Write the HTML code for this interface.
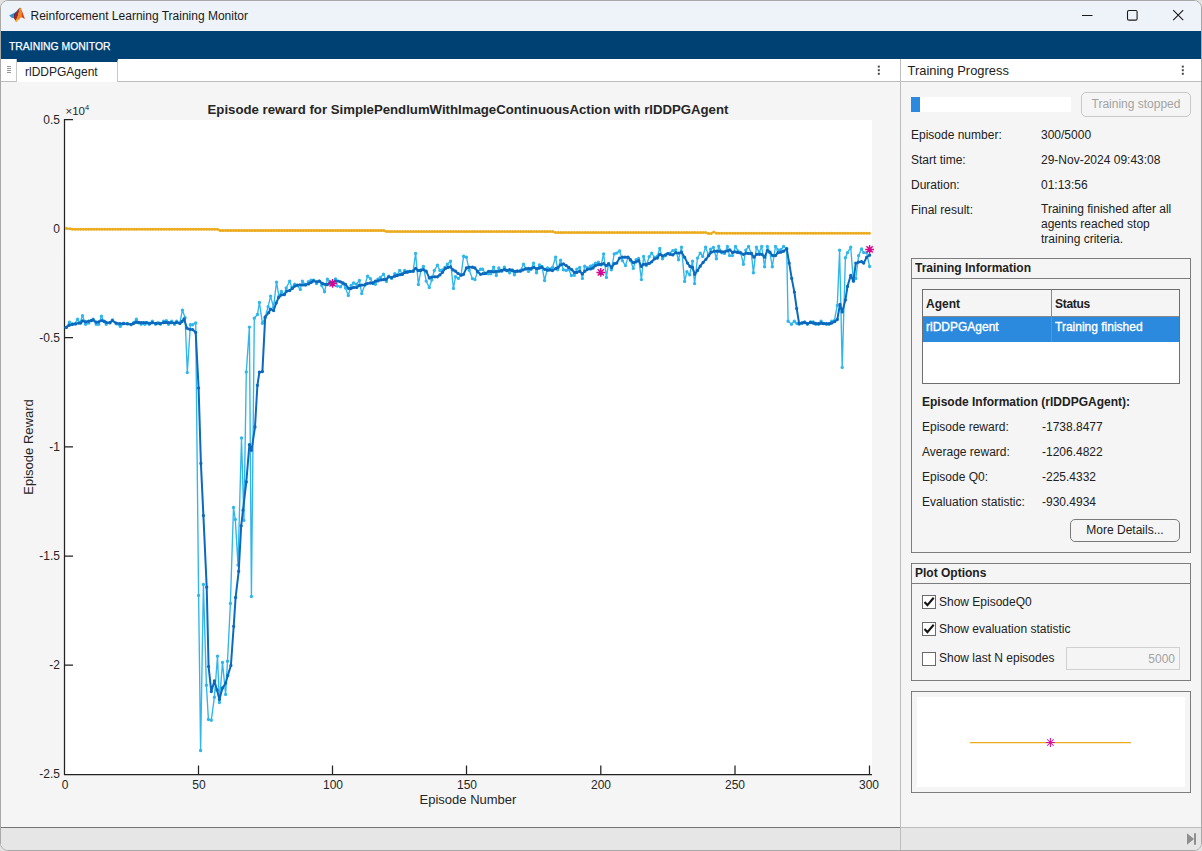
<!DOCTYPE html>
<html><head><meta charset="utf-8"><title>Reinforcement Learning Training Monitor</title>
<style>
*{box-sizing:border-box;margin:0;padding:0}
html,body{width:1202px;height:851px;overflow:hidden;background:#e2e2e2}
body{font-family:"Liberation Sans",sans-serif;font-size:12px;color:#212121;position:relative}
.win{position:absolute;left:0;top:0;width:1202px;height:851px;background:#f5f5f5;border:1px solid #a8a8a8;border-radius:8px;overflow:hidden}
.abs{position:absolute}
.titlebar{left:0;top:0;width:1200px;height:30px;background:#eef3f9}
.title{left:29.5px;top:8px;font-size:12px;color:#1a1a1a;white-space:nowrap}
.strip{left:0;top:30px;width:1200px;height:28px;background:#004173}
.strip span{position:absolute;left:8.4px;top:9px;color:#fff;-webkit-text-stroke:0.25px #fff;font-size:11.3px;white-space:nowrap;transform:scaleX(.921);transform-origin:0 0}
.tabbar{left:0;top:58px;width:1200px;height:23px;background:#fff;border-bottom:1px solid #bdbdbd}
.grip{left:0;top:58px;width:16px;height:23px;background:#fff;border-right:1px solid #c8c8c8;border-bottom:1px solid #bdbdbd}
.tab{left:16px;top:58px;width:101px;height:23px;background:#fff;border-top:3px solid #004173;border-right:1px solid #c8c8c8}
.tab span{position:absolute;left:8px;top:3px;font-size:12px;color:#212121}
.vdiv{left:899px;top:58px;width:1px;height:792px;background:#bdbdbd}
.status{left:0;top:826px;width:1200px;height:24px;background:#e6e6e6;border-top:1px solid #bdbdbd}
.lbl{white-space:nowrap;font-size:12px;line-height:15px;color:#212121}
.b{font-weight:bold}
.sel{color:#fff;-webkit-text-stroke:0.35px #fff}
.box{border:1px solid #7d7d7d}
.btn{border:1px solid #7a7a7a;border-radius:5px;background:#f5f5f5;text-align:center;font-size:12px;line-height:21px}
.cb{width:14px;height:14px;border:1px solid #6a6a6a;background:#fff}
</style></head><body>
<div class="win">
<div class="abs titlebar"></div>
<svg class="abs" style="left:-1px;top:-1px" width="40" height="30" viewBox="0 0 40 30"><path d="M9.1 15.5L14.1 13.1 16.5 11.2 18.6 8.7 19.4 8.2 18.6 11.6 16.2 15.2 13.9 18.3 12 18Z" fill="#2e8fd9"/><path d="M19.3 8.1C18 10.2 16.2 12.8 14.2 14.3L13.9 18.3 16.2 22C17.6 18 18.9 12 19.9 8Z" fill="#9b2a1e"/><path d="M16.9 11.8L14.2 14.2 14.6 16.6Z" fill="#5a2a55"/><path d="M19.6 8.2C20 7.7 20.7 7.7 21.1 8.3 21.5 10.5 21.7 13.5 21.6 17 20 18.2 18 20.6 16.2 22L15.5 20.8C17.6 17 19 12.2 19.6 8.2Z" fill="#ef8525"/><path d="M21 8.2C22 11 23.5 15.4 25 18.8 23.8 18.6 22.5 17.4 21.5 17.3 21.7 14 21.5 10.6 21 8.2Z" fill="#cf3f1d"/><path d="M16.2 22L15.1 20.2C16.2 19.4 17.6 18.9 18.7 18.8 18 20.2 17 21.4 16.2 22Z" fill="#f8b52c"/></svg>
<div class="abs title">Reinforcement Learning Training Monitor</div>
<svg class="abs" style="left:1070px;top:0" width="130" height="30" viewBox="1071 1 130 30"><path d="M1082 15.5h10.5" stroke="#1a1a1a" stroke-width="1.1" fill="none"/><rect x="1127.5" y="10.5" width="9.6" height="9.6" rx="1.4" stroke="#1a1a1a" stroke-width="1.1" fill="none"/><path d="M1173.2 10.2l10 10M1183.2 10.2l-10 10" stroke="#1a1a1a" stroke-width="1.1" fill="none"/></svg>
<div class="abs strip"><span>TRAINING MONITOR</span></div>
<div class="abs tabbar"></div>
<div class="abs grip"><svg width="16" height="22" viewBox="0 0 16 22"><path d="M6 7.5h4M6 9.5h4M6 11.5h4M6 13.5h4" stroke="#8a8a8a" stroke-width="0.9"/></svg></div>
<div class="abs tab"><span>rlDDPGAgent</span></div>
<svg class="abs" style="left:873px;top:62px" width="10" height="16"><rect x="3.8" y="2.6" width="2" height="2" fill="#4a4a4a"/><rect x="3.8" y="6.2" width="2" height="2" fill="#4a4a4a"/><rect x="3.8" y="9.8" width="2" height="2" fill="#4a4a4a"/></svg>
<svg class="abs" style="left:1177px;top:62px" width="10" height="16"><rect x="3.8" y="2.6" width="2" height="2" fill="#4a4a4a"/><rect x="3.8" y="6.2" width="2" height="2" fill="#4a4a4a"/><rect x="3.8" y="9.8" width="2" height="2" fill="#4a4a4a"/></svg>
<div class="abs" style="left:-1px;top:81px"><svg class="chart" width="900" height="746" viewBox="0 82 900 746">
<rect x="65" y="120" width="807" height="654" fill="#fff"/>
<path d="M64.5 119V775M64 774.5H872" stroke="#222" stroke-width="1.25" fill="none"/>
<path d="M64 119.5h9M64 228.6h9M64 337.7h9M64 446.9h9M64 556.1h9M64 665.2h9M198.5 774v-8.5M332.5 774v-8.5M466.5 774v-8.5M600.8 774v-8.5M735 774v-8.5M869.5 774v-8.5" stroke="#222" stroke-width="1.25" fill="none"/>
<polyline points="66.2,327.4 69.4,322.2 72.5,323.9 75.0,323.7 77.5,319.3 80.0,322.7 82.5,315.6 85.6,324.3 88.7,323.1 91.2,320.6 93.1,319.3 96.2,324.3 98.7,324.3 101.4,316.2 103.9,321.2 106.2,324.3 109.9,322.7 112.4,319.9 116.2,323.7 120.3,326.4 123.6,323.7 127.4,323.4 131.1,324.7 133.6,322.7 136.4,319.3 138.6,322.7 141.1,324.3 144.9,324.3 147.3,322.7 149.2,324.3 152.3,321.2 155.5,324.3 158.0,322.7 160.5,324.3 163.6,321.2 166.3,320.6 168.6,324.3 171.7,321.2 174.6,324.3 176.7,321.2 179.8,323.1 182.4,310.2 185.1,317.6 187.3,372.6 190.4,324.7 192.6,324.7 195.7,323.0 198.6,595.4 200.6,750.5 203.4,584.4 206.4,685.3 208.4,719.4 211.3,720.2 214.4,697.2 217.5,656.3 219.4,702.5 222.5,662.4 225.6,694.4 227.5,661.3 230.4,603.5 233.5,507.4 235.3,519.4 238.0,565.1 241.5,438.0 243.9,520.4 246.3,371.9 249.4,327.1 251.4,596.4 254.3,318.3 257.4,314.5 259.4,302.5 262.4,323.3 265.0,318.0 268.1,306.7 270.6,296.1 273.5,307.4 276.5,282.1 278.9,296.1 281.4,291.4 284.3,294.6 286.2,288.0 289.7,281.1 291.8,287.4 294.7,284.3 297.4,285.5 300.3,289.6 302.4,281.1 305.5,284.9 308.4,281.8 311.1,280.1 313.6,280.1 316.5,283.6 319.3,281.1 321.8,285.5 324.5,291.8 327.4,279.3 329.9,282.4 332.4,284.9 335.5,278.9 337.4,286.1 340.5,286.8 343.0,283.6 345.5,288.0 348.3,295.5 351.1,285.5 353.6,283.0 356.3,284.3 359.4,280.5 361.7,293.6 364.8,284.9 367.6,276.2 370.4,278.6 372.9,283.6 375.4,284.3 377.9,279.3 380.4,277.4 383.5,274.3 386.4,281.4 388.8,276.2 391.6,278.4 394.8,273.7 397.2,274.9 399.7,270.5 402.5,273.7 404.7,270.5 407.5,271.4 410.0,271.4 413.1,271.2 415.6,253.4 418.4,284.6 420.9,269.9 423.4,266.4 426.2,281.1 429.3,287.6 431.8,279.9 434.3,270.5 437.4,265.2 439.9,270.5 442.4,269.9 444.9,267.4 447.4,264.3 450.5,261.2 453.4,288.4 455.5,276.8 458.4,278.4 461.1,274.9 463.6,256.2 466.4,257.2 469.2,270.2 472.4,278.6 474.9,279.6 477.4,272.4 480.5,269.3 482.6,269.3 485.5,273.4 488.2,273.7 490.8,273.7 493.6,267.2 496.3,275.5 498.8,268.0 501.7,271.2 504.4,267.2 506.9,270.5 509.6,272.7 512.0,269.9 514.4,274.7 517.3,270.9 520.4,270.5 523.5,264.3 526.0,268.7 528.5,271.4 531.0,269.3 533.5,263.1 536.5,272.7 539.4,264.9 541.9,266.4 544.6,280.5 547.5,268.0 550.0,268.9 552.5,267.4 555.6,257.2 557.7,269.7 560.6,260.2 563.4,269.7 566.2,270.5 568.7,269.3 571.4,275.5 574.3,275.2 576.8,269.3 579.7,267.4 582.4,278.4 584.7,266.2 587.4,268.0 590.5,266.2 593.0,265.2 595.5,263.1 598.4,262.2 601.1,264.9 603.6,253.9 606.4,277.4 608.6,263.4 611.4,269.7 614.2,253.9 616.7,253.1 619.6,250.9 622.4,260.6 625.5,265.6 628.0,257.4 630.5,260.6 633.3,268.4 636.1,259.7 638.6,258.4 641.4,279.6 643.6,256.4 646.3,265.6 649.2,256.8 651.7,253.1 654.4,257.4 657.3,256.2 659.8,248.4 662.5,258.7 665.4,255.6 667.9,253.4 670.0,253.1 672.8,250.6 675.6,249.9 678.5,259.7 681.5,247.2 684.6,281.4 686.9,271.8 689.7,274.7 692.5,261.2 694.6,283.6 697.5,258.1 700.2,253.1 702.7,256.4 705.6,247.2 708.4,254.9 710.6,249.3 713.4,247.4 716.4,258.7 718.7,246.2 721.8,252.7 724.5,253.4 727.4,246.5 729.6,255.6 732.4,255.6 735.5,246.5 738.0,250.9 740.9,253.4 743.4,264.3 745.8,250.2 748.6,246.5 751.4,253.7 753.4,272.7 756.4,247.2 759.2,252.4 761.7,246.5 764.6,266.8 767.3,246.5 769.8,252.2 772.3,266.8 775.5,246.5 778.0,249.9 780.8,249.7 783.6,246.5 786.7,249.3 788.1,321.3 791.5,324.3 794.3,321.3 796.8,323.4 799.1,324.3 802.1,323.0 804.7,322.0 807.4,324.3 810.5,322.0 813.2,322.0 815.8,324.3 818.5,324.3 821.1,321.3 823.7,323.4 826.4,324.3 829.0,324.3 831.7,321.3 834.3,320.8 837.3,305.4 839.6,250.3 842.2,367.4 845.4,257.8 847.5,252.6 850.7,247.3 853.4,281.1 855.8,278.5 858.6,255.6 861.6,249.0 863.7,252.6 866.6,252.6 869.6,266.5" fill="none" stroke="#2fb6ec" stroke-width="1.35" stroke-linejoin="round"/>
<path d="M66.2 327.4h0M69.4 322.2h0M72.5 323.9h0M75.0 323.7h0M77.5 319.3h0M80.0 322.7h0M82.5 315.6h0M85.6 324.3h0M88.7 323.1h0M91.2 320.6h0M93.1 319.3h0M96.2 324.3h0M98.7 324.3h0M101.4 316.2h0M103.9 321.2h0M106.2 324.3h0M109.9 322.7h0M112.4 319.9h0M116.2 323.7h0M120.3 326.4h0M123.6 323.7h0M127.4 323.4h0M131.1 324.7h0M133.6 322.7h0M136.4 319.3h0M138.6 322.7h0M141.1 324.3h0M144.9 324.3h0M147.3 322.7h0M149.2 324.3h0M152.3 321.2h0M155.5 324.3h0M158.0 322.7h0M160.5 324.3h0M163.6 321.2h0M166.3 320.6h0M168.6 324.3h0M171.7 321.2h0M174.6 324.3h0M176.7 321.2h0M179.8 323.1h0M182.4 310.2h0M185.1 317.6h0M187.3 372.6h0M190.4 324.7h0M192.6 324.7h0M195.7 323.0h0M198.6 595.4h0M200.6 750.5h0M203.4 584.4h0M206.4 685.3h0M208.4 719.4h0M211.3 720.2h0M214.4 697.2h0M217.5 656.3h0M219.4 702.5h0M222.5 662.4h0M225.6 694.4h0M227.5 661.3h0M230.4 603.5h0M233.5 507.4h0M235.3 519.4h0M238.0 565.1h0M241.5 438.0h0M243.9 520.4h0M246.3 371.9h0M249.4 327.1h0M251.4 596.4h0M254.3 318.3h0M257.4 314.5h0M259.4 302.5h0M262.4 323.3h0M265.0 318.0h0M268.1 306.7h0M270.6 296.1h0M273.5 307.4h0M276.5 282.1h0M278.9 296.1h0M281.4 291.4h0M284.3 294.6h0M286.2 288.0h0M289.7 281.1h0M291.8 287.4h0M294.7 284.3h0M297.4 285.5h0M300.3 289.6h0M302.4 281.1h0M305.5 284.9h0M308.4 281.8h0M311.1 280.1h0M313.6 280.1h0M316.5 283.6h0M319.3 281.1h0M321.8 285.5h0M324.5 291.8h0M327.4 279.3h0M329.9 282.4h0M332.4 284.9h0M335.5 278.9h0M337.4 286.1h0M340.5 286.8h0M343.0 283.6h0M345.5 288.0h0M348.3 295.5h0M351.1 285.5h0M353.6 283.0h0M356.3 284.3h0M359.4 280.5h0M361.7 293.6h0M364.8 284.9h0M367.6 276.2h0M370.4 278.6h0M372.9 283.6h0M375.4 284.3h0M377.9 279.3h0M380.4 277.4h0M383.5 274.3h0M386.4 281.4h0M388.8 276.2h0M391.6 278.4h0M394.8 273.7h0M397.2 274.9h0M399.7 270.5h0M402.5 273.7h0M404.7 270.5h0M407.5 271.4h0M410.0 271.4h0M413.1 271.2h0M415.6 253.4h0M418.4 284.6h0M420.9 269.9h0M423.4 266.4h0M426.2 281.1h0M429.3 287.6h0M431.8 279.9h0M434.3 270.5h0M437.4 265.2h0M439.9 270.5h0M442.4 269.9h0M444.9 267.4h0M447.4 264.3h0M450.5 261.2h0M453.4 288.4h0M455.5 276.8h0M458.4 278.4h0M461.1 274.9h0M463.6 256.2h0M466.4 257.2h0M469.2 270.2h0M472.4 278.6h0M474.9 279.6h0M477.4 272.4h0M480.5 269.3h0M482.6 269.3h0M485.5 273.4h0M488.2 273.7h0M490.8 273.7h0M493.6 267.2h0M496.3 275.5h0M498.8 268.0h0M501.7 271.2h0M504.4 267.2h0M506.9 270.5h0M509.6 272.7h0M512.0 269.9h0M514.4 274.7h0M517.3 270.9h0M520.4 270.5h0M523.5 264.3h0M526.0 268.7h0M528.5 271.4h0M531.0 269.3h0M533.5 263.1h0M536.5 272.7h0M539.4 264.9h0M541.9 266.4h0M544.6 280.5h0M547.5 268.0h0M550.0 268.9h0M552.5 267.4h0M555.6 257.2h0M557.7 269.7h0M560.6 260.2h0M563.4 269.7h0M566.2 270.5h0M568.7 269.3h0M571.4 275.5h0M574.3 275.2h0M576.8 269.3h0M579.7 267.4h0M582.4 278.4h0M584.7 266.2h0M587.4 268.0h0M590.5 266.2h0M593.0 265.2h0M595.5 263.1h0M598.4 262.2h0M601.1 264.9h0M603.6 253.9h0M606.4 277.4h0M608.6 263.4h0M611.4 269.7h0M614.2 253.9h0M616.7 253.1h0M619.6 250.9h0M622.4 260.6h0M625.5 265.6h0M628.0 257.4h0M630.5 260.6h0M633.3 268.4h0M636.1 259.7h0M638.6 258.4h0M641.4 279.6h0M643.6 256.4h0M646.3 265.6h0M649.2 256.8h0M651.7 253.1h0M654.4 257.4h0M657.3 256.2h0M659.8 248.4h0M662.5 258.7h0M665.4 255.6h0M667.9 253.4h0M670.0 253.1h0M672.8 250.6h0M675.6 249.9h0M678.5 259.7h0M681.5 247.2h0M684.6 281.4h0M686.9 271.8h0M689.7 274.7h0M692.5 261.2h0M694.6 283.6h0M697.5 258.1h0M700.2 253.1h0M702.7 256.4h0M705.6 247.2h0M708.4 254.9h0M710.6 249.3h0M713.4 247.4h0M716.4 258.7h0M718.7 246.2h0M721.8 252.7h0M724.5 253.4h0M727.4 246.5h0M729.6 255.6h0M732.4 255.6h0M735.5 246.5h0M738.0 250.9h0M740.9 253.4h0M743.4 264.3h0M745.8 250.2h0M748.6 246.5h0M751.4 253.7h0M753.4 272.7h0M756.4 247.2h0M759.2 252.4h0M761.7 246.5h0M764.6 266.8h0M767.3 246.5h0M769.8 252.2h0M772.3 266.8h0M775.5 246.5h0M778.0 249.9h0M780.8 249.7h0M783.6 246.5h0M786.7 249.3h0M788.1 321.3h0M791.5 324.3h0M794.3 321.3h0M796.8 323.4h0M799.1 324.3h0M802.1 323.0h0M804.7 322.0h0M807.4 324.3h0M810.5 322.0h0M813.2 322.0h0M815.8 324.3h0M818.5 324.3h0M821.1 321.3h0M823.7 323.4h0M826.4 324.3h0M829.0 324.3h0M831.7 321.3h0M834.3 320.8h0M837.3 305.4h0M839.6 250.3h0M842.2 367.4h0M845.4 257.8h0M847.5 252.6h0M850.7 247.3h0M853.4 281.1h0M855.8 278.5h0M858.6 255.6h0M861.6 249.0h0M863.7 252.6h0M866.6 252.6h0M869.6 266.5h0" stroke="#2fb6ec" stroke-width="3.4" stroke-linecap="round" fill="none"/>
<polyline points="66.4,228.3 69.9,228.8 72.5,229.2 75.2,229.2 77.9,229.2 80.6,229.2 83.3,229.2 86.0,229.2 88.7,229.2 91.3,229.2 94.0,229.2 96.7,229.2 99.4,229.2 102.1,229.2 104.8,229.2 107.4,229.2 110.1,229.2 112.8,229.2 115.5,229.2 118.2,229.2 120.8,229.2 123.5,229.2 126.2,229.2 128.9,229.2 131.6,229.2 134.3,229.2 136.9,229.2 139.6,229.2 142.3,229.2 145.0,229.2 147.7,229.2 150.4,229.2 153.0,229.2 155.7,229.2 158.4,229.2 161.1,229.2 163.8,229.2 166.4,229.2 169.1,229.2 171.8,229.2 174.5,229.2 177.2,229.2 179.9,229.2 182.6,229.2 185.2,229.2 187.9,229.2 190.6,229.2 193.3,229.2 196.0,229.2 198.7,229.2 201.3,229.2 204.0,229.2 206.7,229.2 209.4,229.2 212.1,229.2 214.8,229.2 217.4,229.2 220.1,230.4 222.8,230.4 225.5,230.4 228.2,230.4 230.8,230.4 233.5,230.4 236.2,230.4 238.9,230.4 241.6,230.4 244.3,230.4 246.9,230.4 249.6,230.4 252.3,230.4 255.0,230.4 257.7,230.4 260.4,230.4 263.0,230.4 265.7,230.4 268.4,230.4 271.1,230.4 273.8,230.4 276.5,230.4 279.1,230.4 281.8,230.4 284.5,230.4 287.2,230.4 289.9,230.4 292.6,230.4 295.2,230.4 297.9,230.4 300.6,230.4 303.3,230.4 306.0,230.4 308.6,230.4 311.3,230.4 314.0,230.4 316.7,230.4 319.4,230.4 322.1,230.4 324.8,230.4 327.4,230.4 330.1,230.4 332.8,230.4 335.5,230.4 338.2,230.4 340.9,230.4 343.5,230.4 346.2,230.4 348.9,230.4 351.6,230.4 354.3,230.4 356.9,230.4 359.6,230.4 362.3,230.4 365.0,230.4 367.7,230.4 370.4,230.4 373.0,230.4 375.7,230.4 378.4,230.4 381.1,230.4 383.8,230.4 386.5,231.5 389.1,231.5 391.8,231.5 394.5,231.5 397.2,231.5 399.9,231.5 402.6,231.5 405.2,231.5 407.9,231.5 410.6,231.5 413.3,231.5 416.0,231.5 418.7,231.5 421.3,231.5 424.0,231.5 426.7,231.5 429.4,231.5 432.1,231.5 434.8,231.5 437.4,231.5 440.1,231.5 442.8,231.5 445.5,231.5 448.2,231.5 450.9,231.5 453.5,231.5 456.2,231.5 458.9,231.5 461.6,231.5 464.3,231.5 466.9,231.5 469.6,231.5 472.3,231.5 475.0,231.5 477.7,231.5 480.4,231.5 483.1,231.5 485.7,231.5 488.4,231.5 491.1,231.5 493.8,231.5 496.5,231.5 499.1,231.5 501.8,231.5 504.5,231.5 507.2,231.5 509.9,231.5 512.6,231.5 515.2,231.5 517.9,231.5 520.6,231.5 523.3,231.5 526.0,231.5 528.7,231.5 531.3,231.5 534.0,231.5 536.7,231.5 539.4,231.5 542.1,231.5 544.8,231.5 547.4,231.5 550.1,231.5 552.8,231.5 555.5,232.5 558.2,232.5 560.9,232.5 563.5,232.5 566.2,232.5 568.9,232.5 571.6,232.5 574.3,232.5 577.0,232.5 579.6,232.5 582.3,232.5 585.0,232.5 587.7,232.5 590.4,232.5 593.0,232.5 595.7,232.5 598.4,232.5 601.1,232.5 603.8,232.5 606.5,232.5 609.1,232.5 611.8,232.5 614.5,232.5 617.2,232.5 619.9,232.5 622.6,232.5 625.2,232.5 627.9,232.5 630.6,232.5 633.3,232.5 636.0,232.5 638.7,232.5 641.3,232.5 644.0,232.5 646.7,232.5 649.4,232.5 652.1,232.5 654.8,232.5 657.4,232.5 660.1,232.5 662.8,232.5 665.5,232.5 668.2,232.5 670.9,232.5 673.5,232.5 676.2,232.5 678.9,232.5 681.6,232.5 684.3,232.5 687.0,232.5 689.6,232.5 692.3,232.5 695.0,232.5 697.7,232.5 700.4,232.5 703.0,232.5 705.7,232.5 708.4,233.5 711.1,233.5 713.8,231.9 716.5,233.2 719.1,233.2 721.8,233.2 724.5,233.2 727.2,233.2 729.9,233.2 732.6,233.2 735.2,233.2 737.9,233.2 740.6,233.2 743.3,233.2 746.0,233.2 748.7,233.2 751.4,233.2 754.0,233.2 756.7,233.2 759.4,233.2 762.1,233.2 764.8,233.2 767.5,233.2 770.1,233.2 772.8,233.2 775.5,233.2 778.2,233.2 780.9,233.2 783.5,233.2 786.2,233.2 788.9,233.2 791.6,233.2 794.3,233.2 797.0,233.2 799.6,233.2 802.3,233.2 805.0,233.2 807.7,233.2 810.4,233.2 813.1,233.2 815.7,233.2 818.4,233.2 821.1,233.2 823.8,233.2 826.5,233.2 829.1,233.2 831.8,233.2 834.5,233.2 837.2,233.2 839.9,233.2 842.6,233.2 845.2,233.2 847.9,233.2 850.6,233.2 853.3,233.2 856.0,233.2 858.7,233.2 861.4,233.2 864.0,233.2 866.7,233.2 869.4,233.2" fill="none" stroke="#ecab1c" stroke-width="1.6"/>
<path d="M66.4 228.3h0M69.9 228.8h0M72.5 229.2h0M75.2 229.2h0M77.9 229.2h0M80.6 229.2h0M83.3 229.2h0M86.0 229.2h0M88.7 229.2h0M91.3 229.2h0M94.0 229.2h0M96.7 229.2h0M99.4 229.2h0M102.1 229.2h0M104.8 229.2h0M107.4 229.2h0M110.1 229.2h0M112.8 229.2h0M115.5 229.2h0M118.2 229.2h0M120.8 229.2h0M123.5 229.2h0M126.2 229.2h0M128.9 229.2h0M131.6 229.2h0M134.3 229.2h0M136.9 229.2h0M139.6 229.2h0M142.3 229.2h0M145.0 229.2h0M147.7 229.2h0M150.4 229.2h0M153.0 229.2h0M155.7 229.2h0M158.4 229.2h0M161.1 229.2h0M163.8 229.2h0M166.4 229.2h0M169.1 229.2h0M171.8 229.2h0M174.5 229.2h0M177.2 229.2h0M179.9 229.2h0M182.6 229.2h0M185.2 229.2h0M187.9 229.2h0M190.6 229.2h0M193.3 229.2h0M196.0 229.2h0M198.7 229.2h0M201.3 229.2h0M204.0 229.2h0M206.7 229.2h0M209.4 229.2h0M212.1 229.2h0M214.8 229.2h0M217.4 229.2h0M220.1 230.4h0M222.8 230.4h0M225.5 230.4h0M228.2 230.4h0M230.8 230.4h0M233.5 230.4h0M236.2 230.4h0M238.9 230.4h0M241.6 230.4h0M244.3 230.4h0M246.9 230.4h0M249.6 230.4h0M252.3 230.4h0M255.0 230.4h0M257.7 230.4h0M260.4 230.4h0M263.0 230.4h0M265.7 230.4h0M268.4 230.4h0M271.1 230.4h0M273.8 230.4h0M276.5 230.4h0M279.1 230.4h0M281.8 230.4h0M284.5 230.4h0M287.2 230.4h0M289.9 230.4h0M292.6 230.4h0M295.2 230.4h0M297.9 230.4h0M300.6 230.4h0M303.3 230.4h0M306.0 230.4h0M308.6 230.4h0M311.3 230.4h0M314.0 230.4h0M316.7 230.4h0M319.4 230.4h0M322.1 230.4h0M324.8 230.4h0M327.4 230.4h0M330.1 230.4h0M332.8 230.4h0M335.5 230.4h0M338.2 230.4h0M340.9 230.4h0M343.5 230.4h0M346.2 230.4h0M348.9 230.4h0M351.6 230.4h0M354.3 230.4h0M356.9 230.4h0M359.6 230.4h0M362.3 230.4h0M365.0 230.4h0M367.7 230.4h0M370.4 230.4h0M373.0 230.4h0M375.7 230.4h0M378.4 230.4h0M381.1 230.4h0M383.8 230.4h0M386.5 231.5h0M389.1 231.5h0M391.8 231.5h0M394.5 231.5h0M397.2 231.5h0M399.9 231.5h0M402.6 231.5h0M405.2 231.5h0M407.9 231.5h0M410.6 231.5h0M413.3 231.5h0M416.0 231.5h0M418.7 231.5h0M421.3 231.5h0M424.0 231.5h0M426.7 231.5h0M429.4 231.5h0M432.1 231.5h0M434.8 231.5h0M437.4 231.5h0M440.1 231.5h0M442.8 231.5h0M445.5 231.5h0M448.2 231.5h0M450.9 231.5h0M453.5 231.5h0M456.2 231.5h0M458.9 231.5h0M461.6 231.5h0M464.3 231.5h0M466.9 231.5h0M469.6 231.5h0M472.3 231.5h0M475.0 231.5h0M477.7 231.5h0M480.4 231.5h0M483.1 231.5h0M485.7 231.5h0M488.4 231.5h0M491.1 231.5h0M493.8 231.5h0M496.5 231.5h0M499.1 231.5h0M501.8 231.5h0M504.5 231.5h0M507.2 231.5h0M509.9 231.5h0M512.6 231.5h0M515.2 231.5h0M517.9 231.5h0M520.6 231.5h0M523.3 231.5h0M526.0 231.5h0M528.7 231.5h0M531.3 231.5h0M534.0 231.5h0M536.7 231.5h0M539.4 231.5h0M542.1 231.5h0M544.8 231.5h0M547.4 231.5h0M550.1 231.5h0M552.8 231.5h0M555.5 232.5h0M558.2 232.5h0M560.9 232.5h0M563.5 232.5h0M566.2 232.5h0M568.9 232.5h0M571.6 232.5h0M574.3 232.5h0M577.0 232.5h0M579.6 232.5h0M582.3 232.5h0M585.0 232.5h0M587.7 232.5h0M590.4 232.5h0M593.0 232.5h0M595.7 232.5h0M598.4 232.5h0M601.1 232.5h0M603.8 232.5h0M606.5 232.5h0M609.1 232.5h0M611.8 232.5h0M614.5 232.5h0M617.2 232.5h0M619.9 232.5h0M622.6 232.5h0M625.2 232.5h0M627.9 232.5h0M630.6 232.5h0M633.3 232.5h0M636.0 232.5h0M638.7 232.5h0M641.3 232.5h0M644.0 232.5h0M646.7 232.5h0M649.4 232.5h0M652.1 232.5h0M654.8 232.5h0M657.4 232.5h0M660.1 232.5h0M662.8 232.5h0M665.5 232.5h0M668.2 232.5h0M670.9 232.5h0M673.5 232.5h0M676.2 232.5h0M678.9 232.5h0M681.6 232.5h0M684.3 232.5h0M687.0 232.5h0M689.6 232.5h0M692.3 232.5h0M695.0 232.5h0M697.7 232.5h0M700.4 232.5h0M703.0 232.5h0M705.7 232.5h0M708.4 233.5h0M711.1 233.5h0M713.8 231.9h0M716.5 233.2h0M719.1 233.2h0M721.8 233.2h0M724.5 233.2h0M727.2 233.2h0M729.9 233.2h0M732.6 233.2h0M735.2 233.2h0M737.9 233.2h0M740.6 233.2h0M743.3 233.2h0M746.0 233.2h0M748.7 233.2h0M751.4 233.2h0M754.0 233.2h0M756.7 233.2h0M759.4 233.2h0M762.1 233.2h0M764.8 233.2h0M767.5 233.2h0M770.1 233.2h0M772.8 233.2h0M775.5 233.2h0M778.2 233.2h0M780.9 233.2h0M783.5 233.2h0M786.2 233.2h0M788.9 233.2h0M791.6 233.2h0M794.3 233.2h0M797.0 233.2h0M799.6 233.2h0M802.3 233.2h0M805.0 233.2h0M807.7 233.2h0M810.4 233.2h0M813.1 233.2h0M815.7 233.2h0M818.4 233.2h0M821.1 233.2h0M823.8 233.2h0M826.5 233.2h0M829.1 233.2h0M831.8 233.2h0M834.5 233.2h0M837.2 233.2h0M839.9 233.2h0M842.6 233.2h0M845.2 233.2h0M847.9 233.2h0M850.6 233.2h0M853.3 233.2h0M856.0 233.2h0M858.7 233.2h0M861.4 233.2h0M864.0 233.2h0M866.7 233.2h0M869.4 233.2h0" stroke="#ecab1c" stroke-width="3.0" stroke-linecap="round" fill="none"/>
<polyline points="66.2,327.4 69.4,325.2 72.5,324.3 75.6,323.9 78.7,323.1 80.6,323.1 82.5,320.9 85.6,321.8 88.7,321.2 91.2,320.6 93.1,319.9 96.2,322.2 98.7,321.8 101.8,320.6 104.3,321.4 106.2,322.4 109.9,322.7 112.4,320.6 116.2,323.1 119.9,323.7 123.6,323.4 127.4,323.9 131.1,324.3 133.6,323.4 136.1,322.2 138.6,322.4 141.1,322.7 143.6,322.7 146.1,322.7 149.8,323.4 152.3,322.7 156.1,323.4 159.8,323.4 163.6,322.7 166.1,322.4 168.6,322.7 171.1,322.7 174.2,323.1 176.7,322.4 179.8,323.4 182.0,321.5 184.1,319.0 186.9,328.2 189.8,329.3 192.6,329.6 195.7,332.4 198.6,388.1 200.9,463.4 203.4,515.6 206.7,587.2 208.6,666.6 211.3,691.6 214.4,681.0 217.0,690.0 219.4,699.4 222.5,688.0 225.7,683.1 227.8,675.4 230.9,665.5 233.7,626.3 235.6,597.5 238.7,571.3 241.2,525.8 243.0,510.2 246.3,482.0 249.4,444.7 251.5,450.3 255.0,427.0 257.4,385.3 259.4,372.2 262.4,371.6 265.2,316.9 268.7,312.7 270.4,309.2 273.6,310.6 276.2,303.0 278.7,297.4 281.4,294.9 284.3,294.6 286.8,291.1 289.7,290.5 292.4,288.4 294.9,286.1 297.4,285.1 299.9,284.9 303.0,284.9 305.5,284.9 308.6,283.9 311.1,282.4 313.6,280.9 316.8,281.8 319.3,281.1 322.4,283.4 324.9,284.3 327.4,284.6 329.9,283.0 332.4,282.4 335.5,281.1 338.0,281.1 340.5,281.8 343.0,283.0 345.5,284.3 348.6,288.4 351.1,288.4 353.6,287.4 356.7,287.4 359.2,285.5 361.7,285.1 364.8,284.9 367.3,283.6 370.4,283.0 372.9,283.0 375.4,281.1 377.9,280.9 381.0,279.9 383.5,279.6 386.0,279.3 388.8,276.8 391.6,277.6 394.8,276.2 397.2,275.5 400.0,274.7 402.5,274.3 405.0,272.4 407.5,272.2 410.0,271.4 413.1,271.2 415.6,268.4 418.1,270.5 420.6,270.5 423.4,269.7 426.2,271.2 429.3,278.0 431.8,277.1 434.9,276.8 437.4,276.8 439.9,274.9 442.4,272.4 445.5,268.4 448.0,267.4 450.5,266.8 453.0,269.9 455.5,271.2 458.0,273.4 461.1,275.2 463.6,274.3 466.4,268.0 469.2,267.2 472.4,267.2 474.9,268.0 477.4,271.2 480.5,274.3 483.0,273.7 485.5,273.4 488.6,271.4 491.1,271.4 493.6,271.8 496.1,271.4 499.2,271.2 501.7,270.5 504.4,269.7 506.9,270.5 509.6,269.7 512.3,270.5 514.8,271.4 517.5,271.2 520.4,271.2 522.9,269.9 525.4,268.9 528.5,268.4 531.0,268.7 533.7,267.4 536.9,268.7 539.4,268.0 541.9,267.2 544.7,269.3 547.5,270.2 550.0,269.9 552.5,270.5 555.6,268.7 558.1,267.4 560.6,264.9 563.4,263.9 566.2,265.6 568.7,267.4 571.8,269.7 574.3,272.4 576.8,272.4 579.7,271.2 582.4,273.9 584.9,271.2 587.4,269.3 590.5,268.9 593.0,268.0 595.5,265.6 598.4,264.7 601.1,264.3 603.6,263.7 606.4,265.6 608.6,263.9 611.7,267.4 614.2,263.7 616.7,263.1 619.6,258.1 622.4,257.2 625.1,257.2 628.0,257.2 630.5,259.7 633.3,262.7 636.1,261.8 638.8,260.6 641.4,266.4 643.6,264.3 646.3,264.3 649.2,263.4 651.7,261.8 654.4,258.9 657.3,258.1 659.8,254.3 662.5,255.9 665.4,254.9 667.9,253.7 670.0,254.3 672.8,254.9 675.6,252.7 678.5,253.1 681.5,252.2 684.7,257.4 687.5,263.1 690.0,266.4 692.5,267.4 694.7,274.3 697.5,270.5 700.2,266.2 703.1,262.4 705.9,259.3 708.7,255.6 711.4,252.2 714.3,251.2 716.8,251.2 719.3,251.2 721.8,251.8 724.5,251.8 727.4,250.9 729.9,249.9 732.4,252.4 734.9,251.8 737.6,252.4 740.5,252.7 743.4,254.3 746.1,253.1 748.6,253.4 751.4,253.4 753.9,257.2 756.7,254.3 759.5,254.3 762.0,254.3 764.6,257.2 767.3,250.6 769.8,252.2 772.6,255.6 775.5,255.6 778.0,252.7 780.8,252.2 783.6,251.2 786.7,248.7 789.2,263.1 791.7,278.4 794.4,292.1 796.7,308.6 799.1,323.4 802.1,323.0 804.7,322.5 807.4,323.7 810.5,322.5 813.2,323.0 815.8,323.4 818.5,323.7 821.1,323.0 823.7,323.7 826.4,323.7 829.0,323.7 831.7,323.0 834.7,321.6 837.3,319.5 840.0,304.4 842.2,311.9 845.4,300.1 847.5,286.4 850.7,275.5 853.4,281.1 855.8,263.1 858.6,262.1 861.6,261.7 863.7,263.1 866.6,257.3 869.6,255.2" fill="none" stroke="#0b69be" stroke-width="2" stroke-linejoin="round"/>
<path d="M66.2 327.4h0M69.4 325.2h0M72.5 324.3h0M75.6 323.9h0M78.7 323.1h0M80.6 323.1h0M82.5 320.9h0M85.6 321.8h0M88.7 321.2h0M91.2 320.6h0M93.1 319.9h0M96.2 322.2h0M98.7 321.8h0M101.8 320.6h0M104.3 321.4h0M106.2 322.4h0M109.9 322.7h0M112.4 320.6h0M116.2 323.1h0M119.9 323.7h0M123.6 323.4h0M127.4 323.9h0M131.1 324.3h0M133.6 323.4h0M136.1 322.2h0M138.6 322.4h0M141.1 322.7h0M143.6 322.7h0M146.1 322.7h0M149.8 323.4h0M152.3 322.7h0M156.1 323.4h0M159.8 323.4h0M163.6 322.7h0M166.1 322.4h0M168.6 322.7h0M171.1 322.7h0M174.2 323.1h0M176.7 322.4h0M179.8 323.4h0M182.0 321.5h0M184.1 319.0h0M186.9 328.2h0M189.8 329.3h0M192.6 329.6h0M195.7 332.4h0M198.6 388.1h0M200.9 463.4h0M203.4 515.6h0M206.7 587.2h0M208.6 666.6h0M211.3 691.6h0M214.4 681.0h0M217.0 690.0h0M219.4 699.4h0M222.5 688.0h0M225.7 683.1h0M227.8 675.4h0M230.9 665.5h0M233.7 626.3h0M235.6 597.5h0M238.7 571.3h0M241.2 525.8h0M243.0 510.2h0M246.3 482.0h0M249.4 444.7h0M251.5 450.3h0M255.0 427.0h0M257.4 385.3h0M259.4 372.2h0M262.4 371.6h0M265.2 316.9h0M268.7 312.7h0M270.4 309.2h0M273.6 310.6h0M276.2 303.0h0M278.7 297.4h0M281.4 294.9h0M284.3 294.6h0M286.8 291.1h0M289.7 290.5h0M292.4 288.4h0M294.9 286.1h0M297.4 285.1h0M299.9 284.9h0M303.0 284.9h0M305.5 284.9h0M308.6 283.9h0M311.1 282.4h0M313.6 280.9h0M316.8 281.8h0M319.3 281.1h0M322.4 283.4h0M324.9 284.3h0M327.4 284.6h0M329.9 283.0h0M332.4 282.4h0M335.5 281.1h0M338.0 281.1h0M340.5 281.8h0M343.0 283.0h0M345.5 284.3h0M348.6 288.4h0M351.1 288.4h0M353.6 287.4h0M356.7 287.4h0M359.2 285.5h0M361.7 285.1h0M364.8 284.9h0M367.3 283.6h0M370.4 283.0h0M372.9 283.0h0M375.4 281.1h0M377.9 280.9h0M381.0 279.9h0M383.5 279.6h0M386.0 279.3h0M388.8 276.8h0M391.6 277.6h0M394.8 276.2h0M397.2 275.5h0M400.0 274.7h0M402.5 274.3h0M405.0 272.4h0M407.5 272.2h0M410.0 271.4h0M413.1 271.2h0M415.6 268.4h0M418.1 270.5h0M420.6 270.5h0M423.4 269.7h0M426.2 271.2h0M429.3 278.0h0M431.8 277.1h0M434.9 276.8h0M437.4 276.8h0M439.9 274.9h0M442.4 272.4h0M445.5 268.4h0M448.0 267.4h0M450.5 266.8h0M453.0 269.9h0M455.5 271.2h0M458.0 273.4h0M461.1 275.2h0M463.6 274.3h0M466.4 268.0h0M469.2 267.2h0M472.4 267.2h0M474.9 268.0h0M477.4 271.2h0M480.5 274.3h0M483.0 273.7h0M485.5 273.4h0M488.6 271.4h0M491.1 271.4h0M493.6 271.8h0M496.1 271.4h0M499.2 271.2h0M501.7 270.5h0M504.4 269.7h0M506.9 270.5h0M509.6 269.7h0M512.3 270.5h0M514.8 271.4h0M517.5 271.2h0M520.4 271.2h0M522.9 269.9h0M525.4 268.9h0M528.5 268.4h0M531.0 268.7h0M533.7 267.4h0M536.9 268.7h0M539.4 268.0h0M541.9 267.2h0M544.7 269.3h0M547.5 270.2h0M550.0 269.9h0M552.5 270.5h0M555.6 268.7h0M558.1 267.4h0M560.6 264.9h0M563.4 263.9h0M566.2 265.6h0M568.7 267.4h0M571.8 269.7h0M574.3 272.4h0M576.8 272.4h0M579.7 271.2h0M582.4 273.9h0M584.9 271.2h0M587.4 269.3h0M590.5 268.9h0M593.0 268.0h0M595.5 265.6h0M598.4 264.7h0M601.1 264.3h0M603.6 263.7h0M606.4 265.6h0M608.6 263.9h0M611.7 267.4h0M614.2 263.7h0M616.7 263.1h0M619.6 258.1h0M622.4 257.2h0M625.1 257.2h0M628.0 257.2h0M630.5 259.7h0M633.3 262.7h0M636.1 261.8h0M638.8 260.6h0M641.4 266.4h0M643.6 264.3h0M646.3 264.3h0M649.2 263.4h0M651.7 261.8h0M654.4 258.9h0M657.3 258.1h0M659.8 254.3h0M662.5 255.9h0M665.4 254.9h0M667.9 253.7h0M670.0 254.3h0M672.8 254.9h0M675.6 252.7h0M678.5 253.1h0M681.5 252.2h0M684.7 257.4h0M687.5 263.1h0M690.0 266.4h0M692.5 267.4h0M694.7 274.3h0M697.5 270.5h0M700.2 266.2h0M703.1 262.4h0M705.9 259.3h0M708.7 255.6h0M711.4 252.2h0M714.3 251.2h0M716.8 251.2h0M719.3 251.2h0M721.8 251.8h0M724.5 251.8h0M727.4 250.9h0M729.9 249.9h0M732.4 252.4h0M734.9 251.8h0M737.6 252.4h0M740.5 252.7h0M743.4 254.3h0M746.1 253.1h0M748.6 253.4h0M751.4 253.4h0M753.9 257.2h0M756.7 254.3h0M759.5 254.3h0M762.0 254.3h0M764.6 257.2h0M767.3 250.6h0M769.8 252.2h0M772.6 255.6h0M775.5 255.6h0M778.0 252.7h0M780.8 252.2h0M783.6 251.2h0M786.7 248.7h0M789.2 263.1h0M791.7 278.4h0M794.4 292.1h0M796.7 308.6h0M799.1 323.4h0M802.1 323.0h0M804.7 322.5h0M807.4 323.7h0M810.5 322.5h0M813.2 323.0h0M815.8 323.4h0M818.5 323.7h0M821.1 323.0h0M823.7 323.7h0M826.4 323.7h0M829.0 323.7h0M831.7 323.0h0M834.7 321.6h0M837.3 319.5h0M840.0 304.4h0M842.2 311.9h0M845.4 300.1h0M847.5 286.4h0M850.7 275.5h0M853.4 281.1h0M855.8 263.1h0M858.6 262.1h0M861.6 261.7h0M863.7 263.1h0M866.6 257.3h0M869.6 255.2h0" stroke="#0b69be" stroke-width="3.3" stroke-linecap="round" fill="none"/>
<path d="M328.20 283.40L337.00 283.40M329.49 280.29L335.71 286.51M332.60 279.00L332.60 287.80M335.71 280.29L329.49 286.51" stroke="#d4088e" stroke-width="1.45" fill="none"/><circle cx="332.6" cy="283.4" r="1.2" fill="#d4088e"/><path d="M596.40 272.40L605.20 272.40M597.69 269.29L603.91 275.51M600.80 268.00L600.80 276.80M603.91 269.29L597.69 275.51" stroke="#d4088e" stroke-width="1.45" fill="none"/><circle cx="600.8" cy="272.4" r="1.2" fill="#d4088e"/><path d="M865.20 249.40L874.00 249.40M866.49 246.29L872.71 252.51M869.60 245.00L869.60 253.80M872.71 246.29L866.49 252.51" stroke="#d4088e" stroke-width="1.45" fill="none"/><circle cx="869.6" cy="249.4" r="1.2" fill="#d4088e"/>
<g font-family="Liberation Sans, sans-serif" font-size="12" fill="#262626">
<g text-anchor="end">
<text x="60" y="123.5">0.5</text><text x="60" y="232.5">0</text><text x="60" y="341.5">-0.5</text><text x="60" y="450.5">-1</text><text x="60" y="559.5">-1.5</text><text x="60" y="668.5">-2</text><text x="60" y="777.5">-2.5</text>
</g>
<g text-anchor="middle">
<text x="65" y="789">0</text><text x="199" y="789">50</text><text x="333" y="789">100</text><text x="467" y="789">150</text><text x="601" y="789">200</text><text x="735" y="789">250</text><text x="869" y="789">300</text>
</g>
<text x="65.5" y="115" font-size="11.5">×10<tspan dy="-5" font-size="7.5">4</tspan></text>
<text x="468" y="804" text-anchor="middle" font-size="13">Episode Number</text>
<text transform="translate(33,447) rotate(-90)" text-anchor="middle" font-size="13">Episode Reward</text>
<text x="468" y="114" text-anchor="middle" font-size="13.2" font-weight="bold">Episode reward for SimplePendlumWithImageContinuousAction with rlDDPGAgent</text>
</g>
</svg></div>
<div class="abs lbl" style="left:906.6px;top:62px;font-size:12.9px">Training Progress</div>

<div class="abs" style="left:910px;top:96px;width:160px;height:15px;background:#fff"><div style="width:9px;height:15px;background:#2b89de"></div></div>
<div class="abs btn" style="left:1080px;top:91px;width:110px;height:25px;line-height:22.4px;border-color:#c9c9c9;color:#a3a3a3">Training stopped</div>

<div class="abs lbl" style="left:910px;top:127px">Episode number:</div><div class="abs lbl" style="left:1040px;top:127px">300/5000</div>
<div class="abs lbl" style="left:910px;top:152px">Start time:</div><div class="abs lbl" style="left:1040px;top:152px">29-Nov-2024 09:43:08</div>
<div class="abs lbl" style="left:910px;top:177px">Duration:</div><div class="abs lbl" style="left:1040px;top:177px">01:13:56</div>
<div class="abs lbl" style="left:910px;top:202px">Final result:</div><div class="abs lbl" style="left:1040px;top:201px">Training finished after all<br>agents reached stop<br>training criteria.</div>

<div class="abs box" style="left:910px;top:257px;width:280px;height:295px"></div>
<div class="abs" style="left:910px;top:277px;width:280px;height:1px;background:#7d7d7d"></div>
<div class="abs lbl b" style="left:914px;top:260px">Training Information</div>
<div class="abs" style="left:921px;top:288px;width:258px;height:95px;background:#fff;border:1px solid #6e6e6e"></div>
<div class="abs" style="left:922px;top:289px;width:256px;height:27px;background:#f5f5f5;border-bottom:1px solid #8a8a8a"></div>
<div class="abs" style="left:922px;top:316px;width:256px;height:25px;background:#2b89de"></div>
<div class="abs" style="left:1050px;top:289px;width:1px;height:52px;background:#8a8a8a"></div>
<div class="abs lbl b" style="left:925px;top:296px">Agent</div><div class="abs lbl b" style="left:1054px;top:296px;letter-spacing:-0.3px">Status</div>
<div class="abs lbl sel" style="left:925px;top:319px">rlDDPGAgent</div><div class="abs lbl sel" style="left:1054px;top:319px">Training finished</div>
<div class="abs lbl b" style="left:921px;top:394px">Episode Information (rlDDPGAgent):</div>
<div class="abs lbl" style="left:921px;top:419px">Episode reward:</div><div class="abs lbl" style="left:1041px;top:419px">-1738.8477</div>
<div class="abs lbl" style="left:921px;top:444px">Average reward:</div><div class="abs lbl" style="left:1041px;top:444px">-1206.4822</div>
<div class="abs lbl" style="left:921px;top:469px">Episode Q0:</div><div class="abs lbl" style="left:1041px;top:469px">-225.4332</div>
<div class="abs lbl" style="left:921px;top:494px">Evaluation statistic:</div><div class="abs lbl" style="left:1041px;top:494px">-930.4934</div>
<div class="abs btn" style="left:1069px;top:518px;width:110px;height:23px;line-height:20.5px">More Details...</div>

<div class="abs box" style="left:910px;top:562px;width:280px;height:118px"></div>
<div class="abs" style="left:910px;top:582px;width:280px;height:1px;background:#7d7d7d"></div>
<div class="abs lbl b" style="left:914px;top:565px">Plot Options</div>
<div class="abs cb" style="left:921px;top:594px"><svg width="12" height="12" viewBox="0 0 12 12"><path d="M1.5 6.1l2.9 3L10.7 1.7" stroke="#161616" stroke-width="2.1" fill="none"/></svg></div>
<div class="abs lbl" style="left:938px;top:594px">Show EpisodeQ0</div>
<div class="abs cb" style="left:921px;top:621px"><svg width="12" height="12" viewBox="0 0 12 12"><path d="M1.5 6.1l2.9 3L10.7 1.7" stroke="#161616" stroke-width="2.1" fill="none"/></svg></div>
<div class="abs lbl" style="left:938px;top:621px">Show evaluation statistic</div>
<div class="abs cb" style="left:921px;top:651px"></div>
<div class="abs lbl" style="left:938px;top:650px">Show last N episodes</div>
<div class="abs" style="left:1065px;top:646px;width:114px;height:23px;border:1px solid #d0d0d0;background:#f5f5f5;color:#a3a3a3;text-align:right;padding-right:4px;line-height:22px;font-size:12px">5000</div>

<div class="abs box" style="left:910px;top:690px;width:280px;height:102px"></div>
<div class="abs" style="left:916px;top:696px;width:268px;height:90px;background:#fff"></div>
<svg class="abs" style="left:916px;top:696px" width="268" height="90" viewBox="917 697 268 90"><path d="M970 742.5h161" stroke="#ecab1c" stroke-width="1.25"/><path d="M1045.80 742.50L1055.00 742.50M1047.15 739.25L1053.65 745.75M1050.40 737.90L1050.40 747.10M1053.65 739.25L1047.15 745.75" stroke="#d4129a" stroke-width="1.05" fill="none"/><circle cx="1050.4" cy="742.5" r="1.2" fill="#d4129a"/></svg>

<div class="abs status"></div>
<div class="abs" style="left:0;top:826px;width:899px;height:1px;background:#757575"></div>
<div class="abs vdiv"></div>
<svg class="abs" style="left:1183px;top:830px" width="16" height="16" viewBox="0 0 16 16"><path d="M3 2.2v11.6l7-5.8z" fill="#8f8f8f"/><path d="M10 2.2h2v11.6h-2z" fill="#8f8f8f"/></svg>
</div>
</body></html>
